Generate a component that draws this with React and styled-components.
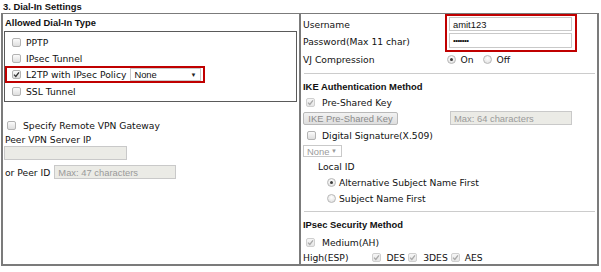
import React from 'react'
import styled, { createGlobalStyle } from 'styled-components'

const colors = {
  text: '#111111',
  border: '#7b7b7b',
  red: '#c00000',
  rule: '#cccccc',
  field: '#c9c9c9',
  disabledBg: '#ebebe6',
  muted: '#9a9a9a'
}

const sans = '"Liberation Sans", Arial, sans-serif'
const wide = '"DejaVu Sans", Verdana, sans-serif'

const GlobalStyle = createGlobalStyle`
  html, body {
    margin: 0;
    padding: 0;
    background: #ffffff;
  }

  body {
    font-family: ${wide};
    font-size: 9.2px;
    color: ${colors.text};
  }
`

// ======================
// LAYOUT
// ======================

const Title = styled.div`
  font-family: ${sans};
  font-weight: bold;
  font-size: 9.4px;
  line-height: 13px;
  height: 13px;
  padding-left: 3px;
`

const Frame = styled.div`
  margin-left: 1px;
  width: 598px;
  height: 253px;
  box-sizing: border-box;
  border: 1px solid ${colors.border};
  border-left-width: 2px;
  border-bottom-width: 2px;
  display: grid;
  grid-template-columns: 297px 1fr;
`

const Cell = styled.div`
  box-sizing: border-box;
  padding-left: ${props => props.$pad}px;
  border-left: ${props => props.$divider ? `1px solid ${colors.border}` : 'none'};
  border-right: 1px solid ${colors.border};
  display: flex;
  flex-direction: column;
`

const Heading = styled.div`
  font-family: ${sans};
  font-weight: bold;
  font-size: 9.4px;
  height: ${props => props.$h || 16}px;
  margin-top: ${props => props.$mt || 0}px;
  padding-left: ${props => props.$pl || 0}px;
  display: flex;
  align-items: center;
`

const Line = styled.div`
  display: flex;
  align-items: center;
  height: ${props => props.$h || 14}px;
  margin-top: ${props => props.$mt || 0}px;
  padding-left: ${props => props.$pl || 0}px;
  white-space: nowrap;
`

const Rule = styled.div`
  height: 1px;
  background: ${colors.rule};
  margin: ${props => props.$mt || 0}px 2px 0 1px;
`

// ======================
// DIAL-IN TYPE LIST
// ======================

const TypeBox = styled.div`
  margin-left: 1px;
  width: 293px;
  box-sizing: border-box;
  border: 1px solid #5a5a5a;
  padding: 2px 0;
`

const TypeRow = styled.div`
  display: flex;
  align-items: center;
  height: 16px;
  padding-left: 7px;
`

const PolicyRow = styled.div`
  display: flex;
  align-items: center;
  box-sizing: border-box;
  width: 200px;
  height: 17px;
  padding-left: 5px;
  border: 2px solid ${colors.red};
`

// ======================
// CONTROLS
// ======================

const CheckBox = styled.span`
  flex: none;
  width: 9px;
  height: 9px;
  box-sizing: border-box;
  border: 1px solid ${props => props.$disabled ? '#cfcfcf' : '#b3b3b3'};
  border-radius: 2px;
  background: ${props => props.$disabled
    ? 'linear-gradient(#f6f6f6, #e6e6e6)'
    : 'linear-gradient(#fbfbfb, #dedede)'};
  margin-left: ${props => props.$ml || 0}px;
  margin-right: ${props => props.$mr || 5}px;
  display: flex;
  align-items: center;
  justify-content: center;
`

const RadioDot = styled.span`
  flex: none;
  width: 9px;
  height: 9px;
  box-sizing: border-box;
  border: 1px solid #b8b8b8;
  border-radius: 50%;
  background: radial-gradient(circle at 50% 35%, #ffffff, #dcdcdc);
  margin-left: ${props => props.$ml || 0}px;
  margin-right: ${props => props.$mr || 4}px;
  display: flex;
  align-items: center;
  justify-content: center;

  &::after {
    content: '';
    display: ${props => props.$on ? 'block' : 'none'};
    width: 3px;
    height: 3px;
    border-radius: 50%;
    background: #3c3c3c;
  }
`

const Check = ({ checked, disabled, ml, mr }) => (
  <CheckBox $disabled={disabled} $ml={ml} $mr={mr}>
    {checked && (
      <svg width='7' height='7' viewBox='0 0 7 7'>
        <path d='M1 3.6 L2.8 5.4 L6 1.3' fill='none' stroke={disabled ? '#a8a8a8' : '#333'} strokeWidth='1.3' />
      </svg>
    )}
  </CheckBox>
)

const SelectBox = styled.div`
  display: flex;
  align-items: center;
  justify-content: space-between;
  box-sizing: border-box;
  width: ${props => props.$w}px;
  height: ${props => props.$h}px;
  margin-left: ${props => props.$ml || 0}px;
  margin-top: ${props => props.$mt || 0}px;
  padding: 0 4px 0 3px;
  border: 1px solid ${colors.field};
  background: #ffffff;
  font-family: ${sans};
  font-size: 9.4px;
  color: ${props => props.$disabled ? colors.muted : colors.text};
`

const Arrow = styled.span`
  font-size: 6px;
  color: ${props => props.$disabled ? colors.muted : '#222'};
`

const Field = styled.div`
  display: flex;
  align-items: center;
  box-sizing: border-box;
  width: ${props => props.$w || 123}px;
  height: ${props => props.$h || 14}px;
  margin-left: ${props => props.$ml || 0}px;
  padding-left: 3px;
  border: 1px solid ${colors.field};
  background: ${props => props.$disabled ? colors.disabledBg : '#ffffff'};
  font-family: ${sans};
  font-size: 9.4px;
  color: ${props => props.$placeholder ? colors.muted : colors.text};
  white-space: nowrap;
`

const Secret = styled.span`
  font-family: ${sans};
  font-size: 8px;
  letter-spacing: -0.6px;
  line-height: 1;
`

const Button = styled.div`
  display: flex;
  align-items: center;
  justify-content: center;
  box-sizing: border-box;
  width: 95px;
  height: 13px;
  border: 1px solid #b9b9b9;
  border-radius: 2px;
  background: linear-gradient(#f2f2f2, #dedede);
  font-family: ${sans};
  font-size: 9.4px;
  color: #8a8a8a;
`

// ======================
// CREDENTIALS
// ======================

const CredRow = styled.div`
  display: flex;
`

const CredLabels = styled.div`
  width: 142px;
  padding-top: 3px;
  display: flex;
  flex-direction: column;
  gap: 3px;
`

const CredLabel = styled.div`
  height: 14px;
  display: flex;
  align-items: center;
`

const RedFrame = styled.div`
  box-sizing: border-box;
  width: 132px;
  height: 38px;
  border: 2px solid ${colors.red};
  padding: 1px 0 0 2px;
  display: flex;
  flex-direction: column;
  gap: 2px;
`

const ValueCol = styled.span`
  display: flex;
  align-items: center;
  margin-left: ${props => props.$ml}px;
`

const App = () => (
  <>
    <GlobalStyle />
    <Title>3. Dial-In Settings</Title>
    <Frame>
      <Cell $pad={0}>
        <Heading $h={17} $pl={2}>Allowed Dial-In Type</Heading>
        <TypeBox>
          <TypeRow><Check />PPTP</TypeRow>
          <TypeRow><Check />IPsec Tunnel</TypeRow>
          <PolicyRow>
            <Check checked />L2TP with IPsec Policy
            <SelectBox $w={71} $h={13} $ml={4}>None<Arrow>▼</Arrow></SelectBox>
          </PolicyRow>
          <TypeRow><Check />SSL Tunnel</TypeRow>
        </TypeBox>
        <Line $mt={16} $pl={4}><Check mr={7} />Specify Remote VPN Gateway</Line>
        <Line $pl={2}>Peer VPN Server IP</Line>
        <Field $w={123} $ml={1} $disabled />
        <Line $mt={5} $pl={2}>
          or Peer ID
          <Field $w={122} $ml={4} $disabled $placeholder>Max: 47 characters</Field>
        </Line>
      </Cell>

      <Cell $pad={2} $divider>
        <CredRow>
          <CredLabels>
            <CredLabel>Username</CredLabel>
            <CredLabel>Password(Max 11 char)</CredLabel>
          </CredLabels>
          <RedFrame>
            <Field $w={123}>amit123</Field>
            <Field $w={123} $h={15}><Secret>•••••••</Secret></Field>
          </RedFrame>
        </CredRow>
        <Line $h={15}>
          VJ Compression
          <ValueCol $ml={72}><RadioDot $on $mr={5} />On<RadioDot $ml={9} $mr={5} />Off</ValueCol>
        </Line>
        <Rule $mt={6} />
        <Heading $h={14} $mt={5}>IKE Authentication Method</Heading>
        <Line $h={15} $mt={2} $pl={3}><Check checked disabled mr={7} />Pre-Shared Key</Line>
        <Line $h={14} $mt={1}>
          <Button>IKE Pre-Shared Key</Button>
          <Field $w={122} $ml={52} $h={14} $disabled $placeholder>Max: 64 characters</Field>
        </Line>
        <Line $h={15} $mt={3} $pl={4}><Check mr={6} />Digital Signature(X.509)</Line>
        <SelectBox $w={39} $h={12} $mt={2} $disabled>None<Arrow $disabled>▼</Arrow></SelectBox>
        <Line $h={14} $mt={2} $pl={15}>Local ID</Line>
        <Line $h={16} $mt={1} $pl={24}><RadioDot $on $mr={3} />Alternative Subject Name First</Line>
        <Line $h={16} $pl={24}><RadioDot $mr={3} />Subject Name First</Line>
        <Rule $mt={5} />
        <Heading $h={14} $mt={5}>IPsec Security Method</Heading>
        <Line $h={16} $mt={3} $pl={3}><Check checked disabled mr={7} />Medium(AH)</Line>
        <Line $h={15}>
          High(ESP)
          <ValueCol $ml={24}>
            <Check checked disabled mr={5} />DES
            <Check checked disabled ml={3} mr={6} />3DES
            <Check checked disabled ml={3} mr={5} />AES
          </ValueCol>
        </Line>
      </Cell>
    </Frame>
  </>
)

export default App
